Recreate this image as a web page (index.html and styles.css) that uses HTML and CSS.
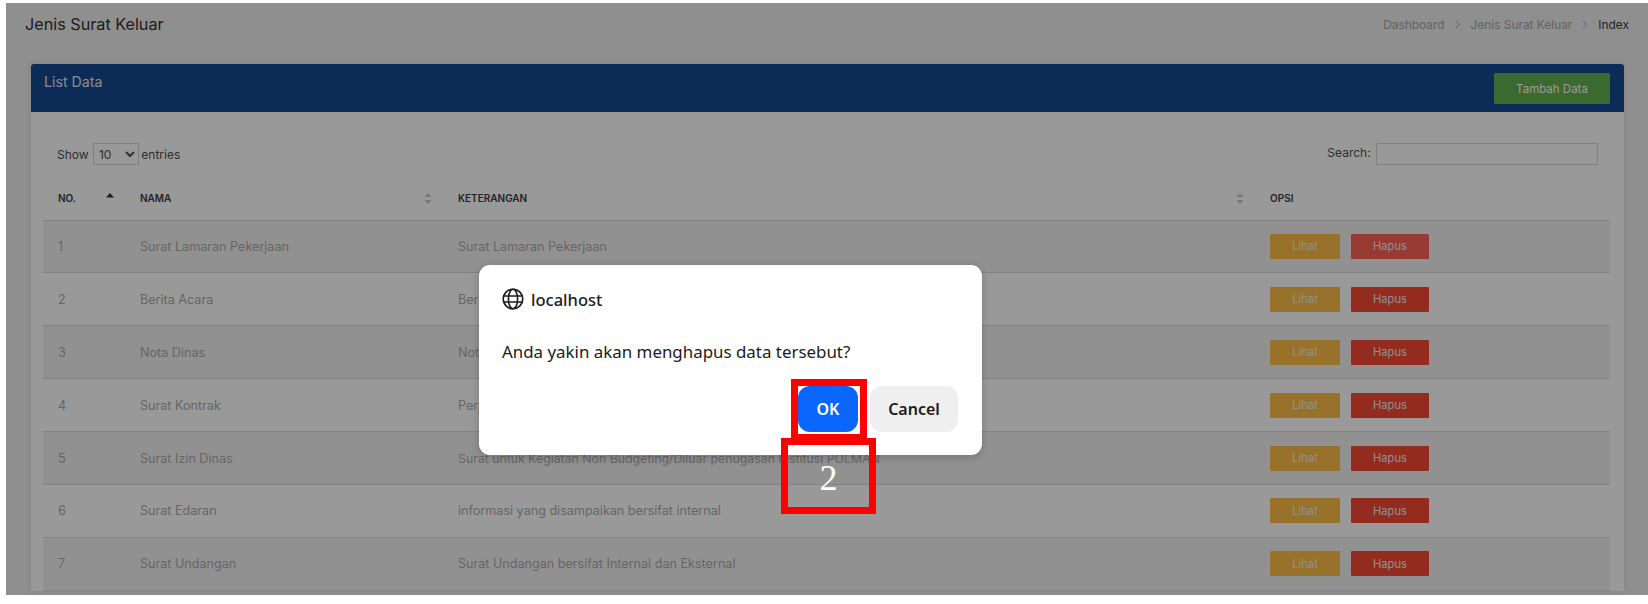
FILE: index.html
```html
<!DOCTYPE html>
<html lang="id">
<head>
    <meta charset="UTF-8">
    <title>Jenis Surat Keluar</title>
    <link rel="stylesheet" href="styles.css">
</head>
<body>
    <div class="frame">
        <div class="page-title">
            <h1>Jenis Surat Keluar</h1>
            <ol class="breadcrumb">
                <li>Dashboard</li>
                <li class="sep"><svg width="6" height="9" viewBox="0 0 6 9"><path d="M1 1l3.5 3.5L1 8" fill="none" stroke="currentColor" stroke-width="1"/></svg></li>
                <li>Jenis Surat Keluar</li>
                <li class="sep"><svg width="6" height="9" viewBox="0 0 6 9"><path d="M1 1l3.5 3.5L1 8" fill="none" stroke="currentColor" stroke-width="1"/></svg></li>
                <li class="current">Index</li>
            </ol>
        </div>

        <div class="card">
            <div class="card-header">
                <h2>List Data</h2>
                <button class="btn-add">Tambah Data</button>
            </div>
            <div class="card-body">
                <div class="table-tools">
                    <label class="entries">Show
                        <select><option>10</option><option>25</option></select>
                        entries</label>
                    <label class="search">Search: <input type="text"></label>
                </div>
                <table class="data-table">
                    <thead>
                        <tr>
                            <th class="col-no"><div class="th-inner">NO.<svg class="sort-up" width="8" height="5" viewBox="0 0 8 5"><path d="M4 0l4 4.5H0z"/></svg></div></th>
                            <th class="col-nama"><div class="th-inner">NAMA<svg class="sort" width="8" height="11" viewBox="0 0 8 11"><path d="M4 0l3.5 4h-7zM4 11L.5 7h7z"/></svg></div></th>
                            <th class="col-ket"><div class="th-inner">KETERANGAN<svg class="sort" width="8" height="11" viewBox="0 0 8 11"><path d="M4 0l3.5 4h-7zM4 11L.5 7h7z"/></svg></div></th>
                            <th>OPSI</th>
                        </tr>
                    </thead>
                    <tbody>
                        <tr>
                            <td>1</td><td>Surat Lamaran Pekerjaan</td><td>Surat Lamaran Pekerjaan</td>
                            <td><button class="btn btn-view">Lihat</button><button class="btn btn-del hover">Hapus</button></td>
                        </tr>
                        <tr>
                            <td>2</td><td>Berita Acara</td><td>Berita Acara</td>
                            <td><button class="btn btn-view">Lihat</button><button class="btn btn-del">Hapus</button></td>
                        </tr>
                        <tr>
                            <td>3</td><td>Nota Dinas</td><td>Nota Dinas</td>
                            <td><button class="btn btn-view">Lihat</button><button class="btn btn-del">Hapus</button></td>
                        </tr>
                        <tr>
                            <td>4</td><td>Surat Kontrak</td><td>Perjanjian Kontrak</td>
                            <td><button class="btn btn-view">Lihat</button><button class="btn btn-del">Hapus</button></td>
                        </tr>
                        <tr>
                            <td>5</td><td>Surat Izin Dinas</td><td class="cell-tight">Surat untuk Kegiatan Non Budgeting/Diluar penugasan Institusi POLMAN</td>
                            <td><button class="btn btn-view">Lihat</button><button class="btn btn-del">Hapus</button></td>
                        </tr>
                        <tr>
                            <td>6</td><td>Surat Edaran</td><td>informasi yang disampaikan bersifat internal</td>
                            <td><button class="btn btn-view">Lihat</button><button class="btn btn-del">Hapus</button></td>
                        </tr>
                        <tr>
                            <td>7</td><td>Surat Undangan</td><td>Surat Undangan bersifat Internal dan Eksternal</td>
                            <td><button class="btn btn-view">Lihat</button><button class="btn btn-del">Hapus</button></td>
                        </tr>
                    </tbody>
                </table>
            </div>
        </div>

        <div class="overlay"></div>

        <div class="dialog">
            <div class="dialog-host">
                <svg width="22" height="22" viewBox="0 0 22 22" fill="none" stroke="#1c1c1c" stroke-width="1.6">
                    <circle cx="11" cy="11" r="9.8"/>
                    <ellipse cx="11" cy="11" rx="4.6" ry="9.8"/>
                    <path d="M1.4 8h19.2M1.4 14h19.2"/>
                </svg>
                <span>localhost</span>
            </div>
            <p class="dialog-msg">Anda yakin akan menghapus data tersebut?</p>
            <div class="dialog-actions">
                <button class="dialog-ok">OK</button>
                <button class="dialog-cancel">Cancel</button>
            </div>
        </div>

        <div class="mark mark-ok"></div>
        <div class="mark mark-num">2</div>
    </div>
</body>
</html>
```

FILE: styles.css
```css
html, body {
    margin: 0;
    background: #fff;
}
body {
    font-family: 'Inter', 'Liberation Sans', sans-serif;
    color: #4a4a4a;
    overflow: hidden;
}
.frame {
    position: relative;
    width: 1642px;
    height: 592px;
    margin: 3px 0 9px 6px;
    padding: 0 24px 0 25px;
    box-sizing: border-box;
    overflow: hidden;
    background: #eeeeee;
}
.page-title {
    display: flex;
    justify-content: space-between;
    align-items: center;
    height: 42px;
    margin: 0 -5px 18px -6px;
}
.page-title h1 {
    margin: 0;
    font-size: 16.2px;
    font-weight: 400;
    color: #333;
}
.breadcrumb {
    display: flex;
    align-items: center;
    gap: 10px;
    margin: 0;
    padding: 0;
    list-style: none;
    font-size: 11.9px;
    color: #a5a5a5;
}
.breadcrumb .current {
    color: #3c3c3c;
}
.card {
    margin-top: 19px;
    background: #fff;
    border-radius: 3px 3px 0 0;
    box-shadow: 0 0 6px rgba(0, 0, 0, 0.08);
}
.card-header {
    display: flex;
    justify-content: space-between;
    height: 48px;
    padding: 8px 14px 0 13px;
    box-sizing: border-box;
    background: #164891;
    border-radius: 3px 3px 0 0;
}
.card-header h2 {
    margin: 0;
    font-size: 14.2px;
    font-weight: 400;
    line-height: 20px;
    color: #e6e6e6;
}
.btn-add {
    width: 116px;
    height: 31px;
    margin-top: 1px;
    border: 0;
    border-radius: 1px;
    background: #61b150;
    color: #fff;
    font: 400 11.5px 'Inter', 'Liberation Sans', sans-serif;
}
.card-body {
    padding: 31px 14px 0 12px;
}
.table-tools {
    display: flex;
    justify-content: space-between;
    padding: 0 12px 0 14px;
    font-size: 12px;
    color: #4e4e4e;
}
.entries select {
    width: 46px;
    height: 22px;
    margin: 0 -1px 0 1px;
    padding: 0 0 0 1px;
    border: 1px solid #d8d8d8;
    border-radius: 0;
    background: #fff;
    color: #4e4e4e;
    font: 12px 'Inter', 'Liberation Sans', sans-serif;
}
.search input {
    width: 222px;
    height: 22px;
    margin-left: 2px;
    padding: 0;
    box-sizing: border-box;
    border: 1px solid #d8d8d8;
    border-radius: 1px;
    background: #fff;
    vertical-align: middle;
}
.data-table {
    width: 1567px;
    border-collapse: collapse;
    table-layout: fixed;
}
.data-table th {
    height: 55px;
    padding: 12px 15px 0;
    box-sizing: border-box;
    border-bottom: 1px solid #d6d6d6;
    font-size: 10px;
    font-weight: 600;
    text-align: left;
    color: #3c3c3c;
}
.col-no {
    width: 82px;
}
.col-nama {
    width: 318px;
}
.col-ket {
    width: 812px;
}
.th-inner {
    display: flex;
    justify-content: space-between;
    align-items: center;
    margin-right: -4px;
}
.sort {
    fill: #c6c6c6;
}
.sort-up {
    fill: #333;
    margin-top: -5px;
}
.data-table td {
    height: 52.9px;
    padding: 0 15px;
    box-sizing: border-box;
    border-bottom: 1px solid #dddddd;
    font-size: 12.6px;
    color: #ababab;
    white-space: nowrap;
}
.data-table td.cell-tight {
    font-size: 12.3px;
}
.data-table tbody tr:nth-child(odd) {
    background: #f2f2f2;
}
.btn {
    height: 25px;
    border: 0;
    border-radius: 1px;
    font: 400 11.2px 'Inter', 'Liberation Sans', sans-serif;
    color: #eeeeee;
    vertical-align: middle;
}
.btn-view {
    width: 70px;
    margin-right: 11px;
    background: #fdbe46;
}
.btn-del {
    width: 78px;
    background: #f54835;
}
.btn-del.hover {
    background: #fa6155;
}
.overlay {
    position: absolute;
    inset: 0;
    background: rgba(0, 0, 0, 0.4);
}
.dialog {
    position: absolute;
    left: 473px;
    top: 262px;
    width: 503px;
    height: 190px;
    box-sizing: border-box;
    padding: 22px 24px 0 23px;
    background: #fff;
    border-radius: 11px;
    box-shadow: 0 2px 8px rgba(0, 0, 0, 0.2);
    font-family: 'Noto Sans', 'Open Sans', sans-serif;
    color: #1c1c1c;
}
.dialog-host {
    display: flex;
    align-items: center;
    gap: 7px;
    height: 24px;
    font-size: 16.5px;
    font-weight: 500;
}
.dialog-msg {
    margin: 29px 0 0;
    font-size: 16.9px;
    line-height: 24px;
}
.dialog-actions {
    display: flex;
    justify-content: flex-end;
    gap: 12px;
    margin-top: 22px;
}
.dialog-actions button {
    height: 46px;
    border: 0;
    border-radius: 12px;
    font: 600 16px 'Noto Sans', 'Open Sans', sans-serif;
}
.dialog-ok {
    width: 60px;
    background: #0b66fb;
    color: #fff;
}
.dialog-cancel {
    width: 88px;
    background: #efefef;
    color: #1c1c1c;
}
.mark {
    position: absolute;
    box-sizing: border-box;
    border: 7px solid #fe0000;
}
.mark-ok {
    left: 785px;
    top: 376px;
    width: 76px;
    height: 62px;
}
.mark-num {
    left: 775px;
    top: 435px;
    width: 95px;
    height: 76px;
    padding-top: 4px;
    display: flex;
    justify-content: center;
    align-items: center;
    font-family: 'Liberation Serif', serif;
    font-size: 36px;
    color: #fff;
}
```
